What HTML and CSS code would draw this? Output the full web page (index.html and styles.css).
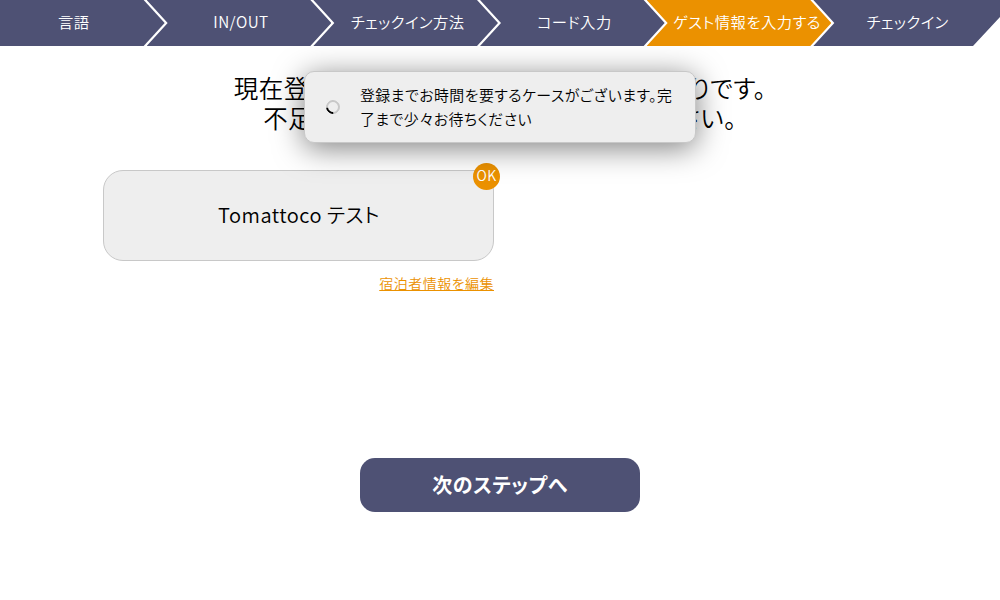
FILE: index.html
```html
<!DOCTYPE html>
<html lang="ja">
<head>
    <meta charset="UTF-8">
    <title>ゲスト情報</title>
    <link rel="stylesheet" href="styles.css">
</head>
<body>
    <!-- Steps -->
    <ol class="steps">
        <li class="step">言語</li>
        <li class="step">IN/OUT</li>
        <li class="step">チェックイン方法</li>
        <li class="step">コード入力</li>
        <li class="step active">ゲスト情報を入力する</li>
        <li class="step">チェックイン</li>
    </ol>

    <main>
        <h1 class="lead">現在登録されているゲスト情報は下記の通りです。<br>不足がある場合は、編集を行なってください。</h1>

        <!-- Guests -->
        <div class="guests">
            <div class="guest">
                <button class="guest-card" type="button">Tomattoco テスト</button>
                <span class="badge">OK</span>
                <a class="edit" href="#">宿泊者情報を編集</a>
            </div>
        </div>

        <button class="next" type="button">次のステップへ</button>
    </main>

    <!-- Loading message -->
    <div class="toast">
        <span class="spinner"></span>
        <p>登録までお時間を要するケースがございます。完了まで少々お待ちください</p>
    </div>
</body>
</html>
```

FILE: styles.css
```css
* {
    box-sizing: border-box;
}

body {
    margin: 0;
    font-family: "Noto Sans CJK JP", sans-serif;
    font-weight: 350;
    font-feature-settings: "palt";
    letter-spacing: 0.03em;
    color: #000;
    background: #fff;
}

button {
    font: inherit;
    font-feature-settings: inherit;
    letter-spacing: inherit;
    color: inherit;
    cursor: pointer;
}

.steps {
    display: grid;
    grid-template-columns: repeat(6, 1fr);
    height: 46px;
    margin: 0;
    padding: 0;
    list-style: none;
    overflow: hidden;
}

.step {
    display: flex;
    align-items: center;
    justify-content: center;
    margin: 0 2px 0 -20px;
    padding: 0 0 4px 4px;
    font-size: 15.3px;
    white-space: nowrap;
    color: #fff;
    background: #4e5174;
    clip-path: polygon(0 0, calc(100% - 21px) 0, 100% 50%, calc(100% - 21px) 100%, 0 100%, 21px 50%);
}

.step:first-child {
    margin-left: 0;
    padding-right: 21px;
    clip-path: polygon(0 0, calc(100% - 21px) 0, 100% 50%, calc(100% - 21px) 100%, 0 100%);
}

.step:last-child {
    margin-right: 0;
    padding-left: 2px;
    clip-path: polygon(0 0, 100% 0, 100% 17px, calc(100% - 27px) 100%, 0 100%, 21px 50%);
}

.step.active {
    padding-left: 16px;
    background: #eb9100;
}

.lead {
    margin: 27px 0 0;
    font-size: 24.5px;
    font-weight: 350;
    line-height: 30px;
    text-align: center;
}

.guests {
    display: grid;
    grid-template-columns: 391px 391px;
    justify-content: space-between;
    width: 794px;
    margin: 37px auto 0;
}

.guest {
    position: relative;
    display: flex;
    flex-direction: column;
}

.guest-card {
    height: 91px;
    padding: 0 5px 2px 6px;
    font-size: 20px;
    background: #eee;
    border: 1px solid #c8c8c8;
    border-radius: 20px;
}

.badge {
    position: absolute;
    top: -7px;
    right: -6px;
    width: 27px;
    height: 27px;
    font-size: 14px;
    line-height: 25px;
    text-align: center;
    color: #fff;
    background: #eb9100;
    border-radius: 50%;
}

.edit {
    align-self: flex-end;
    margin-top: 12px;
    font-size: 14px;
    color: #eb9100;
}

.next {
    display: block;
    width: 280px;
    height: 54px;
    margin: 165px auto 0;
    padding-bottom: 3px;
    font-size: 20px;
    font-weight: 700;
    color: #fff;
    background: #4e5174;
    border: 0;
    border-radius: 15px;
}

.toast {
    position: absolute;
    top: 71px;
    left: 50%;
    display: flex;
    align-items: center;
    gap: 20px;
    width: 392px;
    height: 72px;
    padding: 0 20px 0 21px;
    font-size: 14.9px;
    line-height: 24px;
    background: #eee;
    border: 1px solid #c8c8c8;
    border-radius: 10px;
    box-shadow: 0 5px 30px rgba(0, 0, 0, 0.5);
    transform: translateX(-50%);
}

.toast p {
    margin: 0;
}

.spinner {
    flex: none;
    width: 14px;
    height: 14px;
    border: 2px solid #c8c8c8;
    border-bottom-color: #000;
    border-radius: 50%;
    transform: rotate(40deg);
}
```
